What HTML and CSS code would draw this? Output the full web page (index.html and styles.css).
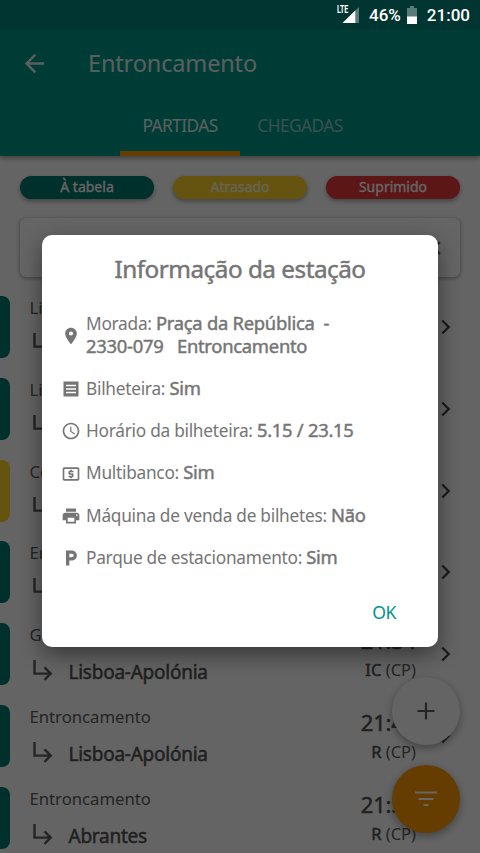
FILE: index.html
```html
<!DOCTYPE html>
<html lang="pt">
<head>
<meta charset="utf-8">
<title>Entroncamento</title>
<link rel="stylesheet" href="styles.css">
</head>
<body>
<svg class="defs" width="0" height="0">
  <symbol id="turn" viewBox="0 0 22 24"><path d="M3.5 1V14.6H19.5M13.5 8.3L19.7 14.6L13.5 20.9" fill="none" stroke="currentColor" stroke-width="2.4"/></symbol>
  <symbol id="chevron" viewBox="0 0 10 16"><path d="M1.2 1.5L7.7 8L1.2 14.5" fill="none" stroke="currentColor" stroke-width="2.4"/></symbol>
</svg>
<div class="screen">
  <header class="appbar">
    <div class="toolbar">
      <svg class="back" viewBox="0 0 24 24"><path d="M20 11H7.83l5.59-5.59L12 4l-8 8 8 8 1.41-1.41L7.83 13H20v-2z" fill="currentColor"/></svg>
      <h1><span>Entroncamento</span></h1>
    </div>
    <nav class="tabs"><span class="tab active">PARTIDAS</span><span class="tab">CHEGADAS</span></nav>
  </header>
  <main>
    <div class="legend">
      <span class="pill green">À tabela</span><span class="pill yellow">Atrasado</span><span class="pill red">Suprimido</span>
    </div>
    <div class="search"><svg viewBox="0 0 14 14"><path d="M1 1L13 13M13 1L1 13" stroke="currentColor" stroke-width="2"/></svg></div>
    <ul class="trains">
      <li class="train"><i class="status"></i><div class="route"><span class="from">Lisboa</span><span class="to"><svg><use href="#turn"/></svg></span></div><svg class="chev"><use href="#chevron"/></svg></li>
      <li class="train"><i class="status"></i><div class="route"><span class="from">Lisboa</span><span class="to"><svg><use href="#turn"/></svg></span></div><svg class="chev"><use href="#chevron"/></svg></li>
      <li class="train"><i class="status late"></i><div class="route"><span class="from">Covilhã</span><span class="to"><svg><use href="#turn"/></svg></span></div><svg class="chev"><use href="#chevron"/></svg></li>
      <li class="train"><i class="status"></i><div class="route"><span class="from">Entr.</span><span class="to"><svg><use href="#turn"/></svg></span></div><svg class="chev"><use href="#chevron"/></svg></li>
      <li class="train"><i class="status"></i><div class="route"><span class="from">Guarda</span><span class="to"><svg><use href="#turn"/></svg><b class="dest">Lisboa-Apolónia</b></span></div><div class="when"><span class="time">21:34</span><span class="kind"><b>IC</b> (CP)</span></div><svg class="chev"><use href="#chevron"/></svg></li>
      <li class="train"><i class="status"></i><div class="route"><span class="from">Entroncamento</span><span class="to"><svg><use href="#turn"/></svg><b class="dest">Lisboa-Apolónia</b></span></div><div class="when"><span class="time">21:48</span><span class="kind"><b>R</b> (CP)</span></div><svg class="chev"><use href="#chevron"/></svg></li>
      <li class="train"><i class="status"></i><div class="route"><span class="from">Entroncamento</span><span class="to"><svg><use href="#turn"/></svg><b class="dest">Abrantes</b></span></div><div class="when"><span class="time">21:58</span><span class="kind"><b>R</b> (CP)</span></div></li>
    </ul>
  </main>
  <div class="fabs">
    <div class="fab plain"><svg viewBox="0 0 24 24"><path d="M3.5 12H20.5M12 3.5V20.5" stroke="currentColor" stroke-width="2.2"/></svg></div>
    <div class="fab orange"><svg viewBox="0 0 24 24"><path d="M1 5.5H23M4.5 12H19.5M9.5 18H14.5" stroke="currentColor" stroke-width="2"/></svg></div>
  </div>
  <div class="scrim">
    <div class="statusbar">
      <svg class="signal" viewBox="0 0 22 18"><path d="M22 1V17H5.5z" fill="#fff" fill-opacity=".35"/><path d="M18.3 4.6V17H5.5z" fill="#fff"/></svg>
      <span class="lte">LTE</span>
      <span class="pct">46%</span>
      <svg class="batt" viewBox="0 0 10 18"><path d="M3 0h4v2h3v16H0V2h3z" fill="#fff" fill-opacity=".35"/><path d="M0 10.5h10V18H0z" fill="#fff"/></svg>
      <span class="clock">21:00</span>
    </div>
    <section class="dialog">
      <h2><span>Informação da estação</span></h2>
      <ul class="facts">
        <li class="two"><svg viewBox="0 0 24 24"><path d="M12 2C8.13 2 5 5.13 5 9c0 5.25 7 13 7 13s7-7.75 7-13c0-3.87-3.13-7-7-7zm0 9.5a2.5 2.5 0 0 1 0-5 2.5 2.5 0 0 1 0 5z"/></svg><p><span>Morada: </span><b>Praça da República&nbsp; -</b><br><b>2330-079 &nbsp; Entroncamento</b></p></li>
        <li><svg viewBox="0 0 24 24"><path fill-rule="evenodd" d="M3 3h18v18H3zM6 7v1.7h12V7zM6 11.2v1.7h12v-1.7zM6 15.4v1.7h12v-1.7z"/></svg><p><span>Bilheteira: </span><b>Sim</b></p></li>
        <li><svg viewBox="0 0 24 24"><path d="M11.99 2C6.47 2 2 6.48 2 12s4.47 10 9.99 10C17.52 22 22 17.52 22 12S17.52 2 11.99 2zM12 20c-4.42 0-8-3.58-8-8s3.58-8 8-8 8 3.58 8 8-3.58 8-8 8zm.5-13H11v6l5.25 3.15.75-1.23-4.5-2.67z"/></svg><p><span>Horário da bilheteira: </span><b>5.15 / 23.15</b></p></li>
        <li><svg viewBox="0 0 24 24"><path d="M11 17h2v-1h1c.55 0 1-.45 1-1v-3c0-.55-.45-1-1-1h-3v-1h4V8h-2V7h-2v1h-1c-.55 0-1 .45-1 1v3c0 .55.45 1 1 1h3v1H9v2h2v1zm9-13H4c-1.11 0-1.99.89-1.99 2L2 18c0 1.11.89 2 2 2h16c1.11 0 2-.89 2-2V6c0-1.11-.89-2-2-2zm0 14H4V6h16v12z"/></svg><p><span>Multibanco: </span><b>Sim</b></p></li>
        <li><svg viewBox="0 0 24 24"><path d="M19 8H5c-1.66 0-3 1.34-3 3v6h4v4h12v-4h4v-6c0-1.66-1.34-3-3-3zm-3 11H8v-5h8v5zm3-7c-.55 0-1-.45-1-1s.45-1 1-1 1 .45 1 1-.45 1-1 1zm-1-9H6v4h12V3z"/></svg><p><span>Máquina de venda de bilhetes: </span><b>Não</b></p></li>
        <li><svg viewBox="0 0 24 24"><path d="M13 3H6v18h4v-6h3c3.31 0 6-2.69 6-6s-2.69-6-6-6zm.2 8H10V7h3.2c1.1 0 2 .9 2 2s-.9 2-2 2z"/></svg><p><span>Parque de estacionamento: </span><b>Sim</b></p></li>
      </ul>
      <div class="actions"><span>OK</span></div>
    </section>
  </div>
</div>
</body>
</html>
```
FILE: styles.css
```css
* { box-sizing: border-box; margin: 0; padding: 0; }
body { font-family: "Noto Sans", sans-serif; background: #fff; }
ul { list-style: none; }
svg { display: block; flex: none; }
.defs { position: absolute; }
.screen { position: relative; width: 480px; height: 853px; overflow: hidden; background: #fafafa; color: #5c5c5c; }
.appbar { position: relative; height: 156px; padding-top: 30px; background: #009688; box-shadow: 0 2px 5px rgba(0,0,0,.4); }
.appbar::before { content: ""; position: absolute; inset: 0 0 auto; height: 30px; background: #00857a; }
.toolbar { height: 66px; display: flex; align-items: center; padding-left: 20px; color: #e2eeec; }
.back { width: 29px; height: 29px; }
.toolbar h1 { margin-left: 39px; font-size: 23.5px; font-weight: 400; line-height: 30px; letter-spacing: -.15px; }
.tabs { height: 60px; display: flex; justify-content: center; }
.tab { width: 120px; height: 60px; text-align: center; font-size: 17.3px; line-height: 60px; letter-spacing: -.55px; color: #8fc9c3; }
.tab.active { color: #e2eeec; border-bottom: 5px solid #ff9800; }
.legend { display: flex; justify-content: space-between; padding: 20px 20px 0; }
.pill { width: 134px; height: 23px; border-radius: 12px; color: #fff; font-size: 14px; line-height: 22px; text-align: center; -webkit-text-stroke: .3px; box-shadow: 0 2px 4px rgba(0,0,0,.35); }
.green { background: #00796b; }
.yellow { background: #fdd02a; color: #fffbd6; }
.red { background: #e53935; }
.search { margin: 19px 20px; height: 59px; border-radius: 6px; background: #fcfcfc; box-shadow: 0 1px 4px rgba(0,0,0,.4); display: flex; align-items: center; justify-content: flex-end; padding-right: 19px; }
.search svg { width: 14px; height: 14px; }
.train { display: flex; height: 81.8px; align-items: flex-start; }
.status { width: 10px; height: 62px; border-radius: 0 8px 8px 0; background: #00796b; flex: none; }
.status.late { background: #fdd02a; }
.route { width: 250px; padding-left: 19.5px; }
.from { display: block; font-size: 16.7px; line-height: 24px; }
.to { display: flex; height: 26px; margin-top: 11px; align-items: center; }
.to svg { width: 22px; height: 24px; margin: 0 16px 0 1px; }
.dest, .kind b, .time { font-weight: 400; -webkit-text-stroke: .5px; color: #525252; }
.dest { font-size: 19px; line-height: 28px; letter-spacing: -.25px; white-space: nowrap; padding-top: 2px; }
.when { width: 156px; text-align: right; display: flex; flex-direction: column; }
.time { font-size: 22px; line-height: 35px; letter-spacing: -.2px; }
.kind { font-size: 16.5px; line-height: 24px; }
.chev { width: 10px; height: 16px; margin: 23px 0 0 auto; margin-right: 29px; color: #484848; }
.fabs { position: absolute; right: 20px; bottom: 20px; display: flex; flex-direction: column; gap: 20px; }
.fab { width: 68px; height: 68px; border-radius: 50%; display: flex; align-items: center; justify-content: center; box-shadow: 0 3px 8px rgba(0,0,0,.35); }
.fab svg { width: 24px; height: 24px; }
.plain { background: #fafafa; }
.orange { background: #ff9800; color: #fff; }
.scrim { position: absolute; inset: 0; background: rgba(0,0,0,.6); }
.statusbar { height: 30px; display: flex; align-items: center; justify-content: flex-end; padding-right: 10px; font: 500 17px/30px Roboto, sans-serif; color: #fff; position: relative; }
.signal { width: 22px; height: 18px; }
.lte { position: absolute; left: 337px; top: 5px; font: 700 10px/10px "Roboto", sans-serif; transform: scaleX(.7); transform-origin: left; }
.pct { margin-left: 10px; }
.batt { width: 10px; height: 18px; margin: 0 10px 0 6px; }
.dialog { width: 396px; height: 412px; margin: 205px 0 0 42px; background: #fff; border-radius: 10px; box-shadow: 0 8px 22px rgba(0,0,0,.45); color: #757575; }
.dialog h2 { padding-top: 17px; text-align: center; font-size: 24.3px; line-height: 34px; font-weight: 400; -webkit-text-stroke: .45px; letter-spacing: -.5px; }
.facts { margin-top: 28px; padding-left: 19px; }
.facts li { display: flex; align-items: center; height: 42.3px; font-size: 17.3px; line-height: 22px; white-space: nowrap; letter-spacing: -.27px; }
.facts .two { height: 43px; margin-bottom: 11px; }
.facts svg { width: 20px; height: 20px; margin-right: 5px; fill: #757575; }
.facts p { margin-top: -2px; }
.facts b { font-weight: 400; font-size: 18.4px; -webkit-text-stroke: .45px; }
.actions { display: flex; justify-content: flex-end; padding: 21px 42px 0 0; font-size: 17.6px; line-height: 24px; letter-spacing: -.4px; color: #009688; }
```
